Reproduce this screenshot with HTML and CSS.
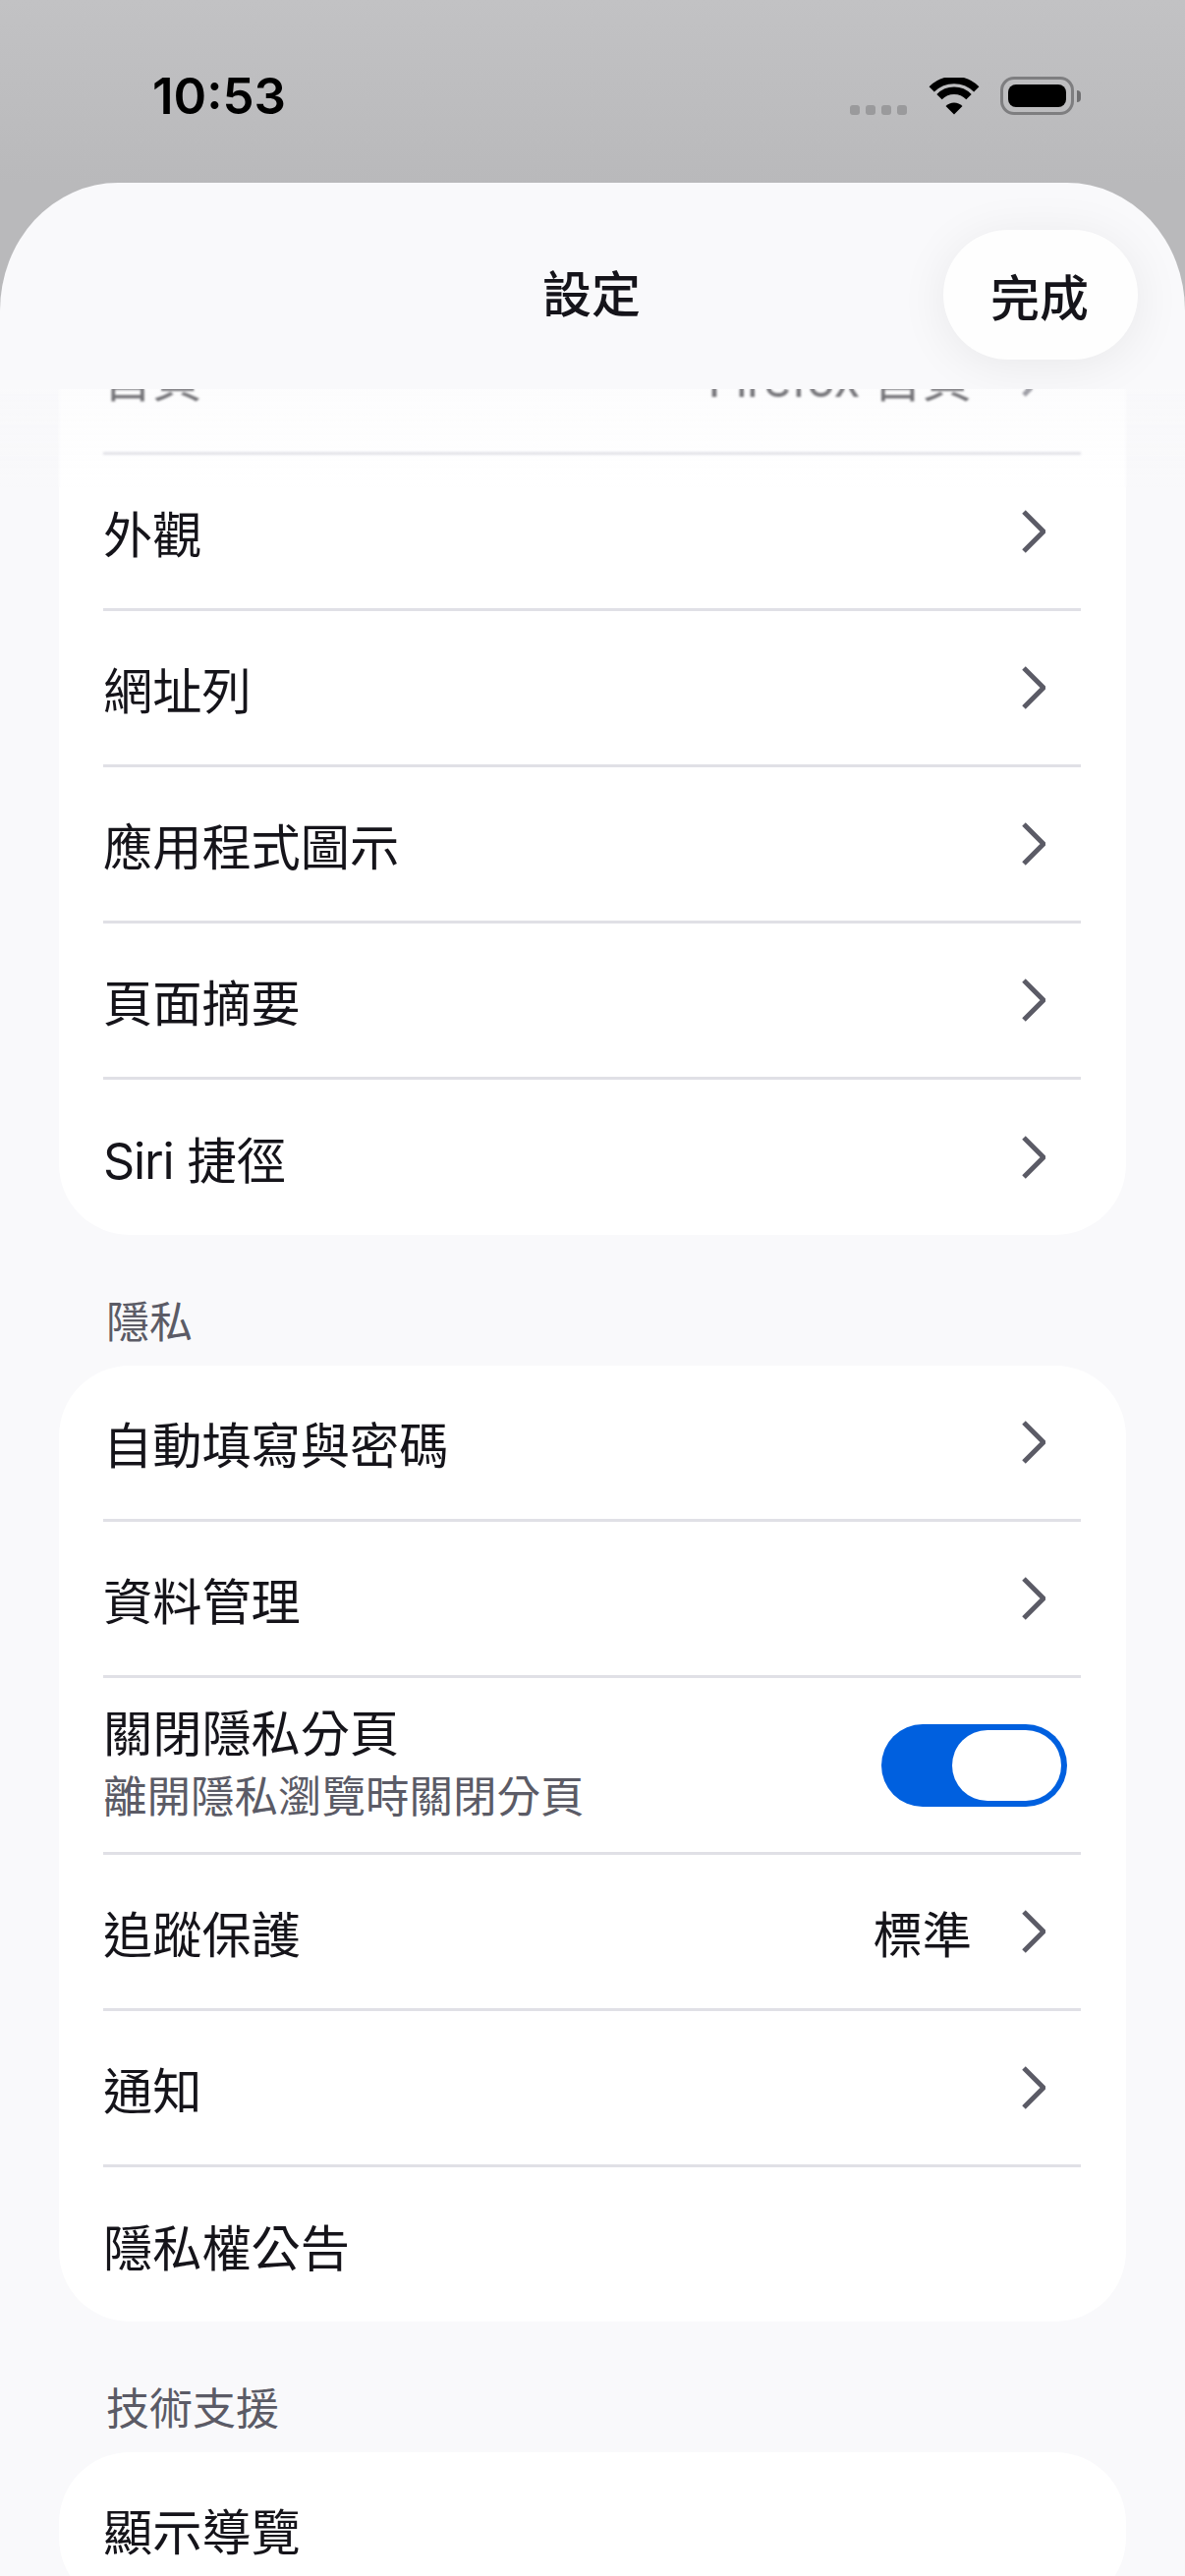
FILE: index.html
```html
<!DOCTYPE html>
<html lang="zh-Hant">
<head>
    <meta charset="UTF-8">
    <title>設定</title>
    <link rel="stylesheet" href="styles.css">
</head>
<body>
    <div class="status-bar">
        <span class="time">10:53</span>
        <div class="status-icons">
            <div class="signal"><i></i><i></i><i></i><i></i></div>
            <svg class="wifi" width="52" height="38" viewBox="0 0 52 38">
                <path d="M3.2 11.8a32.5 32.5 0 0 1 45.6 0" fill="none" stroke="#000" stroke-width="7.5"/>
                <path d="M11 19.6a21 21 0 0 1 30 0" fill="none" stroke="#000" stroke-width="7.5"/>
                <path d="M26 37.5 17.5 29a12 12 0 0 1 17 0z" fill="#000"/>
            </svg>
            <div class="battery"><div class="battery-fill"></div></div>
            <div class="battery-nub"></div>
        </div>
    </div>

    <div class="sheet">
        <header class="sheet-header">
            <span></span>
            <h1 class="sheet-title">設定</h1>
            <button class="done-btn">完成</button>
        </header>

        <div class="list-wrap">
            <div class="list-fade"></div>
            <div class="list">
                <section class="card card-scrolled">
                    <div class="row"><span class="label">首頁</span><span class="value"><span class="latin">Firefox</span> 首頁</span><svg class="chev" width="24" height="44" viewBox="0 0 24 44"><path d="M2 2 22 22 2 42"/></svg></div>
                    <div class="row"><span class="label">外觀</span><svg class="chev" width="24" height="44" viewBox="0 0 24 44"><path d="M2 2 22 22 2 42"/></svg></div>
                    <div class="row"><span class="label">網址列</span><svg class="chev" width="24" height="44" viewBox="0 0 24 44"><path d="M2 2 22 22 2 42"/></svg></div>
                    <div class="row"><span class="label">應用程式圖示</span><svg class="chev" width="24" height="44" viewBox="0 0 24 44"><path d="M2 2 22 22 2 42"/></svg></div>
                    <div class="row"><span class="label">頁面摘要</span><svg class="chev" width="24" height="44" viewBox="0 0 24 44"><path d="M2 2 22 22 2 42"/></svg></div>
                    <div class="row row-last"><span class="label"><span class="latin">Siri</span> 捷徑</span><svg class="chev" width="24" height="44" viewBox="0 0 24 44"><path d="M2 2 22 22 2 42"/></svg></div>
                </section>

                <h2 class="section-title">隱私</h2>
                <section class="card">
                    <div class="row"><span class="label">自動填寫與密碼</span><svg class="chev" width="24" height="44" viewBox="0 0 24 44"><path d="M2 2 22 22 2 42"/></svg></div>
                    <div class="row"><span class="label">資料管理</span><svg class="chev" width="24" height="44" viewBox="0 0 24 44"><path d="M2 2 22 22 2 42"/></svg></div>
                    <div class="row row-toggle">
                        <div class="label-stack">
                            <span class="label">關閉隱私分頁</span>
                            <span class="sublabel">離開隱私瀏覽時關閉分頁</span>
                        </div>
                        <div class="toggle"><div class="thumb"></div></div>
                    </div>
                    <div class="row"><span class="label">追蹤保護</span><span class="value">標準</span><svg class="chev" width="24" height="44" viewBox="0 0 24 44"><path d="M2 2 22 22 2 42"/></svg></div>
                    <div class="row"><span class="label">通知</span><svg class="chev" width="24" height="44" viewBox="0 0 24 44"><path d="M2 2 22 22 2 42"/></svg></div>
                    <div class="row row-last"><span class="label">隱私權公告</span></div>
                </section>

                <h2 class="section-title">技術支援</h2>
                <section class="card">
                    <div class="row"><span class="label">顯示導覽</span></div>
                </section>
            </div>
        </div>
    </div>
</body>
</html>
```

FILE: styles.css
```css
* { box-sizing: border-box; }
html, body { margin: 0; height: 2622px; overflow: hidden; }
body { display: flex; flex-direction: column; font-family: Inter, "Noto Sans CJK TC", sans-serif; color: #15141a; background: linear-gradient(#c2c2c4, #b9b9bb 186px); }

.status-bar { height: 186px; flex: none; display: flex; justify-content: space-between; align-items: flex-start; padding: 78px 106px 0 155px; }
.time { font-size: 51px; font-weight: 600; line-height: 40px; color: #000; }
.status-icons { display: flex; align-items: flex-end; height: 39px; }
.signal { display: flex; gap: 6px; margin-right: 22px; }
.signal i { width: 10px; height: 10px; border-radius: 3px; background: #9a9a9c; }
.wifi { display: block; margin-right: 21px; }
.battery { width: 75px; height: 39px; padding: 5px; border: 3px solid #7e7e80; border-radius: 14px; }
.battery-fill { height: 100%; background: #000; border-radius: 8px; }
.battery-nub { width: 4px; height: 12px; margin: 0 0 13px 3px; background: #6f6f71; border-radius: 0 6px 6px 0; }

.sheet { flex: 1; min-height: 0; display: flex; flex-direction: column; background: #f9f9fb; border-radius: 120px 120px 0 0 / 130px 130px 0 0; overflow: hidden; }
.sheet-header { flex: none; height: 210px; display: grid; grid-template-columns: 1fr auto 1fr; align-items: center; padding: 48px 48px 30px; overflow: hidden; }
.sheet-title { margin: 0 2px 0 0; font-size: 50px; font-weight: 500; line-height: 60px; }
.done-btn { justify-self: end; width: 198px; height: 132px; padding: 0 2px 0 0; border: 0; border-radius: 66px; background: #fefefe; color: #15141a; font: 500 50px Inter, "Noto Sans CJK TC", sans-serif; box-shadow: 0 6px 50px rgba(0,0,0,0.07); }

.list-wrap { position: relative; flex: 1; min-height: 0; overflow: hidden; }
.list-fade { position: absolute; top: 0; left: 0; right: 0; height: 100px; z-index: 1; background: linear-gradient(rgba(249,249,251,0.45), rgba(249,249,251,0)); backdrop-filter: blur(1px); }
.list { padding: 0 60px; }

.card { background: #fff; border-radius: 72px; padding: 0 46px 0 45px; }
.card-scrolled { margin-top: -92px; }
.row { height: 159px; display: flex; align-items: center; border-bottom: 3px solid #e0e0e6; }
.row-last { height: 157px; border-bottom: 0; }
.card-scrolled .row-last { height: 158px; }
.row-toggle { height: 180px; }
.label { flex: 1; padding-top: 8px; font-size: 50.2px; line-height: 60px; }
.value { padding-top: 8px; font-size: 50.2px; line-height: 60px; margin-right: 51px; }
.latin { letter-spacing: -1.2px; }
.chev { flex: none; margin-right: 36px; fill: none; stroke: #5b5b66; stroke-width: 5; }

.label-stack { flex: 1; display: flex; flex-direction: column; padding-bottom: 4px; }
.label-stack .label { padding-top: 0; }
.sublabel { margin-top: 8px; font-size: 44.5px; line-height: 52px; color: #5b5b66; }
.toggle { flex: none; display: flex; justify-content: flex-end; width: 189px; height: 84px; margin-right: 14px; padding: 6px; border-radius: 42px; background: #0060df; }
.thumb { width: 111px; height: 72px; border-radius: 36px; background: #fff; }

.section-title { margin: 0; height: 133px; padding: 67px 0 0 48px; font-size: 44px; font-weight: 400; line-height: 44px; color: #5b5b66; }
```
